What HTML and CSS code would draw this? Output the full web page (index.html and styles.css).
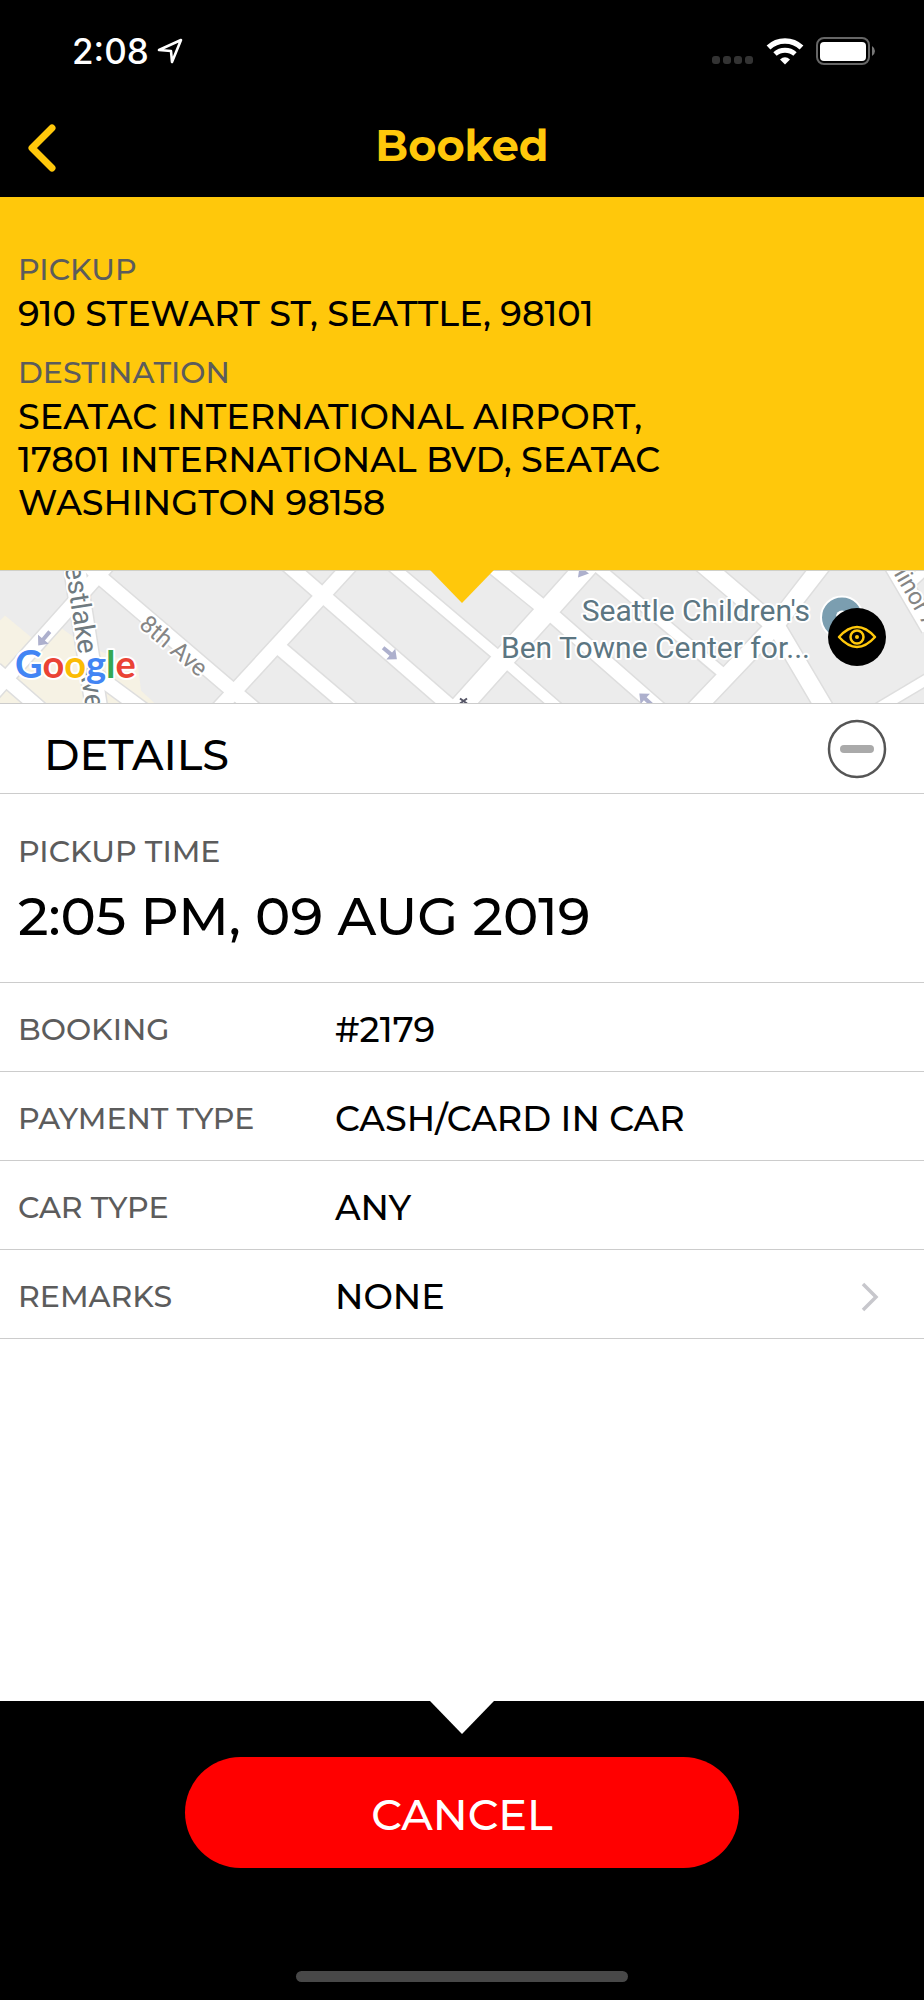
FILE: index.html
```html
<!DOCTYPE html>
<html lang="en">
<head>
<meta charset="utf-8">
<meta name="viewport" content="width=device-width, initial-scale=1">
<title>Booked</title>
<link rel="stylesheet" href="styles.css">
</head>
<body>
<div class="screen">
  <div class="status-bar">
    <div class="status-time">
      <span>2:08</span>
      <svg width="26" height="26" viewBox="0 0 26 26" aria-hidden="true"><path d="M2 12 L24 2 L15 24 L14 13 Z" fill="none" stroke="#fff" stroke-width="2.6" stroke-linejoin="round"/></svg>
    </div>
    <div class="status-icons">
      <svg width="42" height="28" viewBox="0 0 42 28" aria-hidden="true"><g fill="#333"><rect x="0" y="19" width="8" height="8" rx="3"/><rect x="11" y="19" width="8" height="8" rx="3"/><rect x="22" y="19" width="8" height="8" rx="3"/><rect x="33" y="19" width="8" height="8" rx="3"/></g></svg>
      <svg width="38" height="28" viewBox="0 0 38 28" aria-hidden="true"><g fill="none" stroke="#fff"><path d="M2.5 10.5 A24 24 0 0 1 35.500 10.500" stroke-width="5.500"/><path d="M9 17 A15 15 0 0 1 29 17" stroke-width="5"/></g><path d="M14 22.500 Q19 18 24 22.500 L19 27.500 Z" fill="#fff"/></svg>
      <svg width="60" height="28" viewBox="0 0 60 28" aria-hidden="true"><rect x="1" y="1" width="52" height="26" rx="7" fill="none" stroke="#666" stroke-width="2"/><rect x="4" y="5" width="46" height="19" rx="4" fill="#fff"/><path d="M56 9 Q59 11 59 14 Q59 17 56 19 Z" fill="#777"/></svg>
    </div>
  </div>

  <header class="nav">
    <button class="back" type="button" aria-label="Back"><svg width="28" height="48" viewBox="0 0 28 48" aria-hidden="true"><path d="M24 4 L4 24 L24 44" fill="none" stroke="#ffc80b" stroke-width="7" stroke-linecap="round" stroke-linejoin="round"/></svg></button>
    <h1 class="title">Booked</h1>
  </header>

  <section class="trip">
    <h2 class="label">PICKUP</h2>
    <p class="address">910 STEWART ST, SEATTLE, 98101</p>
    <h2 class="label">DESTINATION</h2>
    <p class="address">SEATAC INTERNATIONAL AIRPORT,<br>17801 INTERNATIONAL BVD, SEATAC<br>WASHINGTON 98158</p>
  </section>

  <section class="map" aria-label="Map">
    <svg class="map-canvas" viewBox="0 0 924 133" preserveAspectRatio="xMidYMid slice">
      <rect width="924" height="133" fill="#ececec"/>
      <path d="M0 50 L5 45 L40 74 L62 58 L85 75 L138 95 L141 120 L155 133 L0 133 Z" fill="#f6f2e4"/>
      <g fill="none" stroke="#dedede">
        <g stroke-width="17"><path d="M108 -6 L-8 124"/><path d="M88 -6 L97 4 L256 140"/><path d="M216 141 L352 -7"/><path d="M-5 99 L42 140"/><path d="M98 106 L144 140"/><path d="M278 76 L352 139"/><path d="M285 -8 L455 140"/><path d="M489 -7 L547 40 L661 140"/></g>
        <g stroke-width="13"><path d="M389 -7 L500 87 L561 140"/><path d="M592 -8 L723 103"/><path d="M868 144 L930 107"/><path d="M908 15 L930 -6"/></g>
        <g stroke-width="24"><path d="M590 -8 L547 40 L500 92 L457 140"/><path d="M74 -6 L97 140"/></g>
        <g stroke-width="20"><path d="M823 -7 L775 55 L694 140"/><path d="M702 -7 L777 57 L826 140"/><path d="M892 -7 L930 58"/></g>
      </g>
      <g fill="none" stroke="#fff">
        <g stroke-width="14"><path d="M108 -6 L-8 124"/><path d="M88 -6 L97 4 L256 140"/><path d="M216 141 L352 -7"/><path d="M-5 99 L42 140"/><path d="M98 106 L144 140"/><path d="M278 76 L352 139"/><path d="M285 -8 L455 140"/><path d="M489 -7 L547 40 L661 140"/></g>
        <g stroke-width="10"><path d="M389 -7 L500 87 L561 140"/><path d="M592 -8 L722 102"/><path d="M868 144 L930 107"/><path d="M908 15 L930 -6"/></g>
        <g stroke-width="21"><path d="M590 -8 L547 40 L500 92 L457 140"/><path d="M74 -6 L97 140"/></g>
        <g stroke-width="17"><path d="M823 -7 L775 55 L694 140"/><path d="M702 -7 L777 57 L826 140"/><path d="M892 -7 L930 58"/></g>
      </g>
      <g fill="#adb0cd">
        <path d="M-9 -2 H1 V-7 L9 0 L1 7 V2 H-9 Z" transform="translate(44 68) rotate(130)"/>
        <path d="M-9 -2 H1 V-7 L9 0 L1 7 V2 H-9 Z" transform="translate(390 83) rotate(40)"/>
        <path d="M-9 -2 H1 V-7 L9 0 L1 7 V2 H-9 Z" transform="translate(646 129) rotate(222)"/>
        <path d="M579 0 H585 L589 3 L578 7 Z"/>
      </g>
      <path d="M460 128 L467 133 M467 128 L460 133" stroke="#556" stroke-width="2"/>
      <g class="street">
        <text transform="translate(61 -28) rotate(81)" font-size="28">Westlake</text>
        <text transform="translate(79 94) rotate(81)" font-size="28">Ave</text>
        <text class="minor" transform="translate(138 56) rotate(40)" font-size="24">8th Ave</text>
        <text class="minor" transform="translate(886 -10) rotate(60)" font-size="24">Minor Ave</text>
      </g>
      <circle cx="842" cy="47" r="21" fill="#7b9eb0" stroke="#fff" stroke-width="2"/>
      <circle cx="842" cy="46" r="6" fill="#fff"/>
      <g class="place" text-anchor="end"><text x="810" y="50">Seattle Children's</text><text x="810" y="87">Ben Towne Center for...</text></g>
      <text class="google" x="15" y="107"><tspan fill="#4285f4">G</tspan><tspan fill="#ea4335">o</tspan><tspan fill="#fbbc05">o</tspan><tspan fill="#4285f4">g</tspan><tspan fill="#34a853">l</tspan><tspan fill="#ea4335">e</tspan></text>
    </svg>
    <button class="eye" type="button" aria-label="Show map"><svg width="58" height="58" viewBox="0 0 58 58" aria-hidden="true"><g fill="none" stroke="#ffc80b" stroke-width="2.500"><path d="M11 29 Q29 9 47 29 Q29 49 11 29 Z" stroke-linejoin="round"/><circle cx="29" cy="29" r="6.500"/></g><circle cx="29" cy="29" r="2" fill="#ffc80b"/></svg></button>
  </section>

  <main class="details">
    <div class="details-head">
      <h2 class="details-title">DETAILS</h2>
      <button class="collapse" type="button" aria-label="Collapse details"><svg width="60" height="60" viewBox="0 0 60 60" aria-hidden="true"><circle cx="30" cy="30" r="28" fill="none" stroke="#555" stroke-width="2.500"/><path d="M17 30 H43" stroke="#aaa" stroke-width="8" stroke-linecap="round"/></svg></button>
    </div>
    <div class="time">
      <h3 class="label">PICKUP TIME</h3>
      <p class="time-value">2:05 PM, 09 AUG 2019</p>
    </div>
    <div class="row"><span class="label">BOOKING</span><span class="value">#2179</span></div>
    <div class="row"><span class="label">PAYMENT TYPE</span><span class="value">CASH/CARD IN CAR</span></div>
    <div class="row"><span class="label">CAR TYPE</span><span class="value">ANY</span></div>
    <button class="row" type="button"><span class="label">REMARKS</span><span class="value">NONE</span><svg width="20" height="32" viewBox="0 0 20 32" aria-hidden="true"><path d="M3 3 L16 16 L3 29" fill="none" stroke="#c7c7cc" stroke-width="3.500"/></svg></button>
  </main>

  <footer class="footer">
    <button class="cancel" type="button">CANCEL</button>
    <div class="home"></div>
  </footer>
</div>
</body>
</html>
```
FILE: styles.css
```css
* { box-sizing: border-box; }
body, h1, h2, h3, p { margin: 0; }
body {
  background: #000;
  color: #000;
  font-family: Montserrat, Inter, "Liberation Sans", sans-serif;
  font-weight: 500;
}
button {
  padding: 0;
  border: 0;
  background: none;
  color: inherit;
  font: inherit;
  cursor: pointer;
}
svg { display: block; flex: none; }
.screen { display: flex; flex-direction: column; min-height: 100vh; }

.status-bar {
  display: flex;
  justify-content: space-between;
  align-items: center;
  height: 101px;
  padding: 0 48px 0 72px;
  color: #fff;
}
.status-time {
  display: flex;
  align-items: center;
  gap: 8px;
  font-family: Inter, sans-serif;
  font-size: 35px;
}
.status-icons { display: flex; align-items: center; gap: 12px; }

.nav {
  display: grid;
  grid-template-columns: 80px 1fr 80px;
  align-items: center;
  height: 96px;
  padding-bottom: 2px;
}
.back { display: flex; padding-left: 28px; }
.title {
  padding-bottom: 4px;
  color: #ffc80b;
  font-size: 43px;
  font-weight: 700;
  line-height: 52px;
  text-align: center;
}

.trip {
  position: relative;
  padding: 55px 18px 46px;
  background: #ffc80b;
}
.trip::after, .details::after {
  content: "";
  position: absolute;
  z-index: 1;
  top: 100%;
  left: 50%;
  width: 64px;
  height: 33px;
  margin-left: -32px;
  background: #ffc80b;
  clip-path: polygon(0 0, 100% 0, 50% 100%);
}
.label {
  color: #5c5c5c;
  font-size: 30px;
  font-weight: 500;
  line-height: 36px;
}
.address { font-size: 35px; line-height: 43px; margin-top: 4px; }
.address + .label { margin-top: 20px; }

.map {
  position: relative;
  height: 134px;
  border-top: 1px solid #d0d0c8;
  border-bottom: 1px solid #ccc;
}
.map-canvas { width: 100%; height: 100%; }
.street text, .place text, .google {
  paint-order: stroke;
  stroke: #fff;
  stroke-width: 4px;
  stroke-linejoin: round;
}
.street { font-family: Roboto, sans-serif; font-weight: 400; fill: #6f7a80; }
.street .minor { fill: #858585; }
.place { font-family: Roboto, sans-serif; font-size: 30px; font-weight: 400; fill: #5c7682; }
.google { font-family: Lato, sans-serif; font-size: 38px; font-weight: 700; }
.eye {
  position: absolute;
  top: 37px;
  right: 38px;
  border-radius: 50%;
  background: #000;
}

.details {
  position: relative;
  display: flex;
  flex: 1;
  flex-direction: column;
  background: #fff;
}
.details::after { background: #fff; }
.details-head {
  display: flex;
  justify-content: space-between;
  align-items: center;
  height: 90px;
  padding: 0 37px 0 44px;
  border-bottom: 1px solid #ccc;
}
.details-title { padding-top: 13px; font-size: 43px; font-weight: 500; line-height: 52px; }
.time { height: 189px; padding: 40px 18px 0; border-bottom: 1px solid #ccc; }
.time-value { margin-top: 14px; font-size: 53px; line-height: 64px; }
.row {
  display: grid;
  grid-template-columns: 317px 1fr auto;
  align-items: center;
  height: 89px;
  padding: 5px 44px 0 18px;
  border-bottom: 1px solid #ccc;
  text-align: left;
}
.value { font-size: 35px; line-height: 43px; }

.footer {
  display: flex;
  flex-direction: column;
  align-items: center;
  justify-content: space-between;
  height: 299px;
  padding: 56px 0 18px;
  background: #000;
}
.cancel {
  width: 60%;
  height: 111px;
  border-radius: 60px;
  background: #f00;
  color: #fff;
  font-size: 43px;
  padding-top: 4px;
}
.home { width: 36%; height: 11px; border-radius: 6px; background: #484848; }
```
